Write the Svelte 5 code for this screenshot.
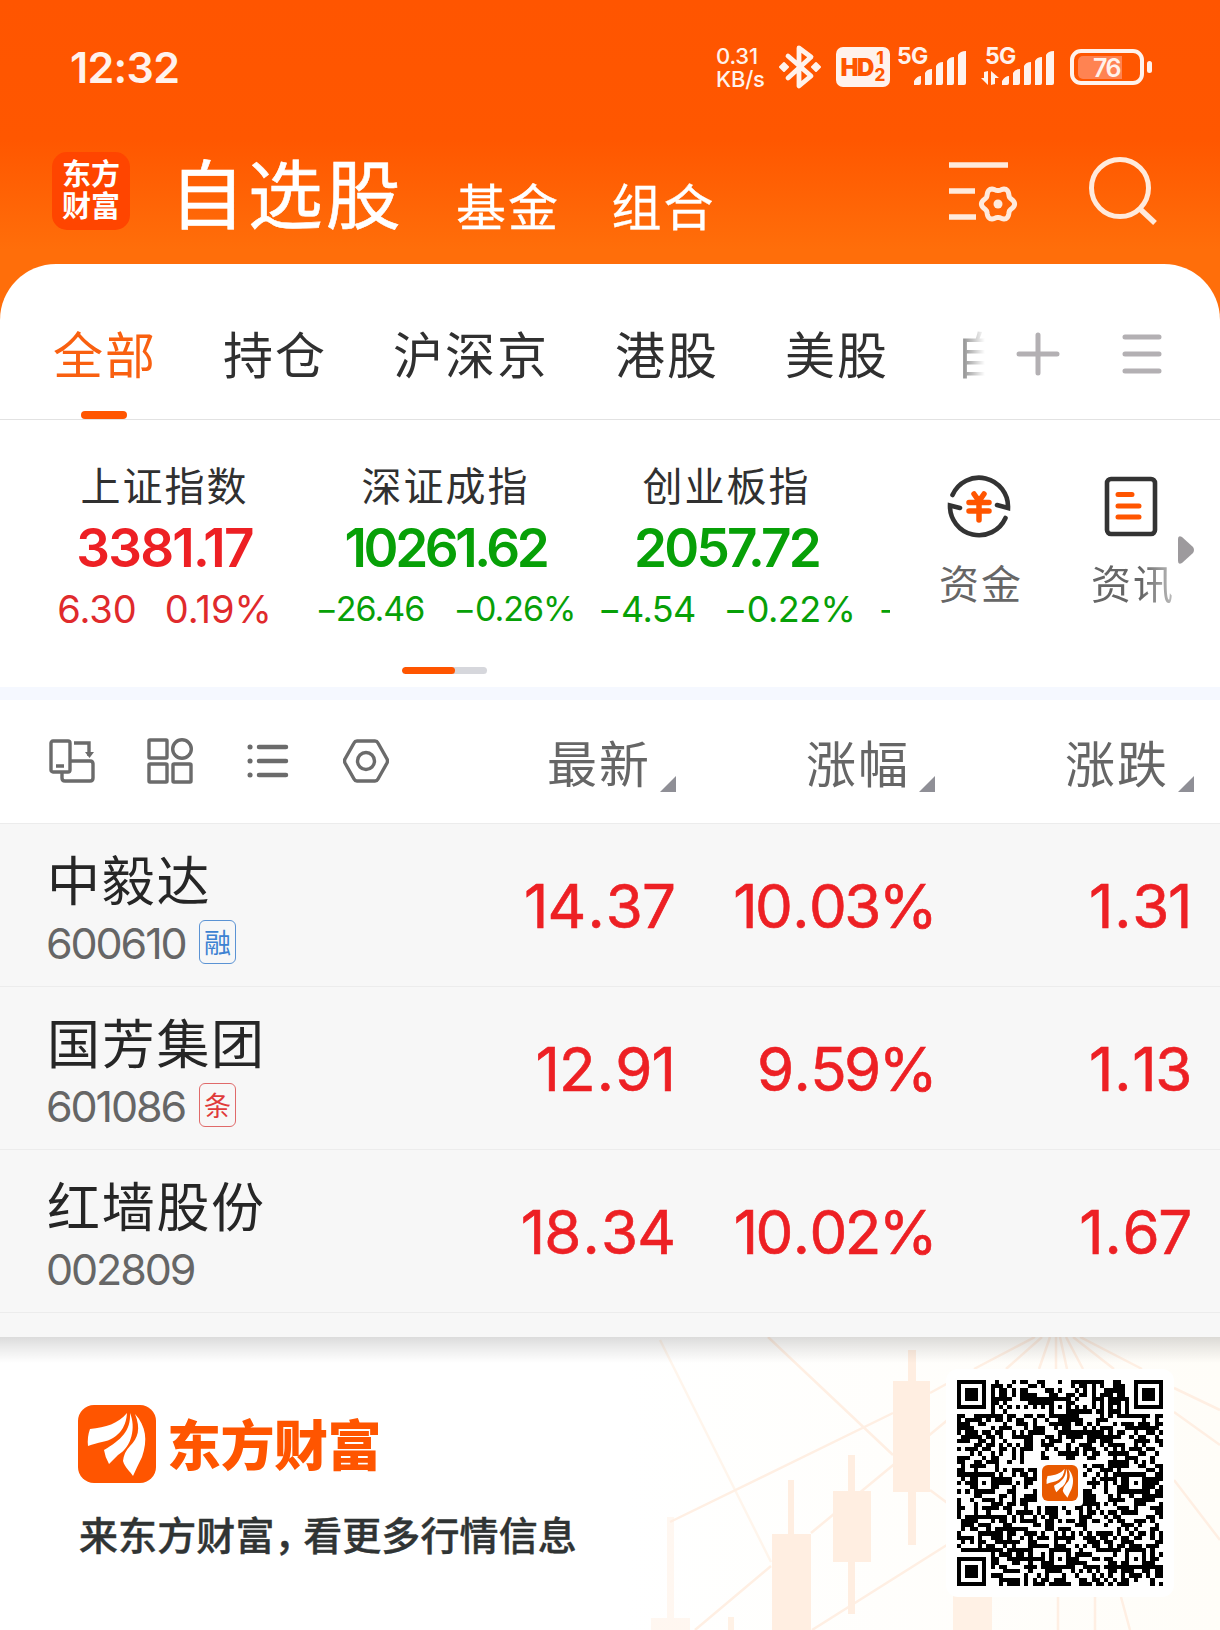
<script>
  const tabs = ['全部', '持仓', '沪深京', '港股', '美股', '自选'];

  const indices = [
    { name: '上证指数', value: '3381.17', change: '6.30', pct: '0.19%', dir: 'up', size: 'l' },
    { name: '深证成指', value: '10261.62', change: '−26.46', pct: '−0.26%', dir: 'down', size: 's' },
    { name: '创业板指', value: '2057.72', change: '−4.54', pct: '−0.22%', dir: 'down', size: 'm' }
  ];

  const columns = ['最新', '涨幅', '涨跌'];

  const stocks = [
    { name: '中毅达', code: '600610', tag: '融', tone: 'blue', last: '14.37', pct: '10.03%', diff: '1.31' },
    { name: '国芳集团', code: '601086', tag: '条', tone: 'red', last: '12.91', pct: '9.59%', diff: '1.13' },
    { name: '红墙股份', code: '002809', tag: '', tone: '', last: '18.34', pct: '10.02%', diff: '1.67' }
  ];

  // QR symbol, version 8: 49 x 49 modules
  const N = 49;
  function buildQr() {
    let seed = 20250;
    const rand = () => {
      seed = (seed * 1103515245 + 12345) % 2147483648;
      return seed / 2147483648;
    };
    const m = Array.from({ length: N }, () => Array.from({ length: N }, () => rand() < 0.52));
    const finder = (r0, c0) => {
      for (let r = -1; r < 8; r++)
        for (let c = -1; c < 8; c++) {
          const y = r0 + r, x = c0 + c;
          if (y < 0 || x < 0 || y >= N || x >= N) continue;
          const d = Math.max(Math.abs(r - 3), Math.abs(c - 3));
          m[y][x] = d === 3 || d <= 1;
        }
    };
    for (let i = 7; i < N - 7; i++) m[6][i] = m[i][6] = i % 2 === 0;
    for (const y of [6, 24, 42])
      for (const x of [6, 24, 42])
        for (let r = -2; r < 3; r++)
          for (let c = -2; c < 3; c++) m[y + r][x + c] = Math.max(Math.abs(r), Math.abs(c)) !== 1;
    finder(0, 0);
    finder(0, N - 7);
    finder(N - 7, 0);
    let d = '';
    for (let y = 0; y < N; y++)
      for (let x = 0; x < N; x++) {
        if (!m[y][x]) continue;
        let w = 1;
        while (x + w < N && m[y][x + w]) w++;
        d += `M${x} ${y}h${w}v1h-${w}z`;
        x += w;
      }
    return d;
  }
  const qr = buildQr();

  // rounded six-lobed gear outline
  const gear = (() => {
    let d = '';
    for (let i = 0; i <= 90; i++) {
      const a = (i / 90) * Math.PI * 2;
      const r = 15 + 1.6 * Math.cos(6 * a);
      d += `${i ? 'L' : 'M'}${(49 + r * Math.cos(a)).toFixed(2)} ${(44 + r * Math.sin(a)).toFixed(2)}`;
    }
    return d + 'Z';
  })();
</script>

{#snippet feather()}
  <path d="M49 8C40 19 28 22 12 24Q9 32 10 41C20 37 29 37 35 33Q48 25 49 8z" />
  <path d="M52 8C53 26 43 35 26 45Q27 52 31 59L40 50C54 42 58 22 52 8z" />
  <path d="M57 9C63 24 60 33 52 41Q46 47 45 56C47 63 52 66 55 71Q59 62 64 52C70 35 68 21 57 9z" />
{/snippet}

{#snippet bars()}
  <svg class="bars" viewBox="0 0 52 34" width="52" height="34">
    <path d="M0 34V30q3-5 7-5V32q0 2-2 2zM11 34V22q2-4 7-4V32q0 2-2 2zM22 34V15q2-4 7-4V32q0 2-2 2zM33 34V10q2-4 7-4V32q0 2-2 2zM44 34V4q2-4 8-4V32q0 2-2 2z" />
  </svg>
{/snippet}

{#snippet price(v)}
  <span class="num">{v.split('.')[0]}<span class="dot">.</span>{v.split('.')[1]}</span>
{/snippet}

<div class="screen">
  <header>
    <div class="status">
      <time>12:32</time>
      <div class="speed"><span>0.31</span><span>KB/s</span></div>
      <svg class="bt" viewBox="0 0 42 46" width="42" height="46">
        <path d="M9 12l23 20-12 10V4l12 9L9 34" fill="none" stroke="#fff2ec" stroke-width="4.8" stroke-linejoin="round" stroke-linecap="round" />
        <path d="M1 23l4-4 4 4-4 4zM33 23l4-4 4 4-4 4z" fill="#fff2ec" stroke="#fff2ec" stroke-width="2" stroke-linejoin="round" />
      </svg>
      <div class="hd"><b>HD</b><span><i>1</i><i>2</i></span></div>
      <div class="signal first"><b>5G</b>{@render bars()}</div>
      <div class="signal second">
        <b>5G</b>
        <svg class="updown" viewBox="0 0 18 14" width="18" height="14"><path d="M0 7h3V1l4-1v14zM10 14V0l8 7h-4v6z" /></svg>
        {@render bars()}
      </div>
      <div class="battery"><div class="cell"><div class="level">76</div></div><div class="nub"></div></div>
    </div>
    <div class="nav">
      <div class="brand"><span>东方</span><span>财富</span></div>
      <h1>自选股</h1>
      <a class="sub">基金</a>
      <a class="sub">组合</a>
      <svg class="filter" viewBox="0 0 70 64" width="70" height="64" fill="none" stroke="#ffeadc">
        <path d="M0 5h59M0 31h26M0 57h27" stroke-width="5.5" />
        <path d={gear} stroke-width="5" stroke-linejoin="round" />
        <circle cx="49" cy="44" r="4.5" fill="#ffeadc" stroke="none" />
      </svg>
      <svg class="search" viewBox="0 0 70 70" width="70" height="70" fill="none" stroke="#ffeadc" stroke-width="5">
        <circle cx="31" cy="31" r="28.5" />
        <path d="M50 51l16 15" stroke-width="5.5" />
      </svg>
    </div>
  </header>

  <main>
    <nav class="tabs">
      <div class="scroll">
        {#each tabs as tab, i}
          <span class="tab" class:active={i === 0}>{tab}</span>
        {/each}
      </div>
      <svg class="plus" viewBox="0 0 44 44" width="44" height="44"><path d="M3 22h38M22 3v38" /></svg>
      <svg class="lines" viewBox="0 0 40 44" width="40" height="44"><path d="M3 5h34M3 22h34M3 39h34" /></svg>
    </nav>

    <section class="market">
      <div class="quotes">
        {#each indices as q}
          <div class="quote {q.dir} {q.size}">
            <span class="qname">{q.name}</span>
            <span class="qvalue">{q.value}</span>
            <span class="qchange"><span>{q.change}</span><span>{q.pct}</span></span>
          </div>
        {/each}
        <div class="quote peek down"><span class="qchange">−</span></div>
      </div>
      <div class="tools">
        <div class="tool">
          <svg viewBox="0 0 64 64" width="64" height="64" fill="none" stroke="#333" stroke-width="4.6" stroke-linecap="round">
            <path d="M5.500 21A29 29 0 0 1 61 34L50 31" />
            <path d="M58.500 44A29 29 0 0 1 3 31.500L13 34" />
            <path d="M27 20l5 7 5-7M22 28.500h20M22 37h20M32 28v18" stroke="#ff5500" stroke-width="5.5" />
          </svg>
          <span>资金</span>
        </div>
        <div class="tool news">
          <svg viewBox="0 0 64 64" width="64" height="64" fill="none" stroke="#333" stroke-width="4.600" stroke-linecap="round">
            <rect x="8" y="5" width="48" height="55" rx="4" />
            <path d="M19 20.500h14M19 32h21M19 43h21" stroke="#ff5500" stroke-width="5" />
          </svg>
          <span>资讯</span>
        </div>
      </div>
      <svg class="more" viewBox="0 0 16 28" width="16" height="28"><path d="M0 3q0-4 4-2l11 10q2 3 0 6L4 27q-4 2-4-2z" fill="#9d9a9d" /></svg>
      <div class="pager"><div></div></div>
    </section>

    <section class="head">
      <div class="views">
        <svg viewBox="0 0 46 46" width="46" height="46">
          <rect x="2" y="3" width="19" height="31" rx="2" />
          <path d="M7 28h8M25 5h15v13M21 23h20q3 0 3 3v14q0 3-3 3H16q-3 0-3-3v-6" />
          <path d="M36 14h9l-4.500 6z" fill="#6b6b6b" stroke="none" />
        </svg>
        <svg viewBox="0 0 46 46" width="46" height="46">
          <rect x="2" y="2" width="18" height="18" rx="1" /><circle cx="35" cy="11" r="9.300" />
          <rect x="2" y="26" width="18" height="18" rx="1" /><rect x="26" y="26" width="18" height="18" rx="1" />
        </svg>
        <svg viewBox="0 0 46 46" width="46" height="46">
          <path d="M14 9h27M14 23h27M14 37h27" stroke-width="4.500" stroke-linecap="round" />
          <path d="M5 9h.1M5 23h.1M5 37h.1" stroke-width="5" stroke-linecap="round" />
        </svg>
        <svg viewBox="0 0 46 46" width="46" height="46">
          <path d="M14 3h18q2 0 3 2l9 16q1 2 0 4l-9 16q-1 2-3 2H14q-2 0-3-2L2 25q-1-2 0-4l9-16q1-2 3-2z" />
          <circle cx="23" cy="23" r="8.500" />
        </svg>
      </div>
      {#each columns as c}
        <div class="col"><span>{c}</span><svg viewBox="0 0 16 16" width="16" height="16"><path d="M16 0v16H0z" /></svg></div>
      {/each}
    </section>

    <section class="list">
      {#each stocks as s}
        <div class="row">
          <div class="who">
            <span class="name">{s.name}</span>
            <div class="meta">
              <span class="code">{s.code}</span>
              {#if s.tag}<span class="tag {s.tone}">{s.tag}</span>{/if}
            </div>
          </div>
          <div class="cellnum last">{@render price(s.last)}</div>
          <div class="cellnum pct">{@render price(s.pct)}</div>
          <div class="cellnum diff">{@render price(s.diff)}</div>
        </div>
      {/each}
    </section>
  </main>

  <footer>
    <svg class="backdrop" viewBox="620 1337 600 293" width="600" height="293">
      <defs>
        <linearGradient id="warm" x1="0" x2="1"><stop offset="0" stop-color="#fff" /><stop offset="1" stop-color="#fffdf8" /></linearGradient>
      </defs>
      <rect x="620" y="1337" width="600" height="293" fill="url(#warm)" />
      <g fill="none" stroke="#ffefe3" stroke-width="2.500">
        <path d="M660 1340L771 1562" stroke="#fff5ec" />
        <path d="M768 1337L893 1455M670 1522L893 1413M930 1393L950 1382M695 1630L771 1566M811 1533L950 1418M812 1630L950 1543M930 1490L950 1505" />
        <path d="M1035 1337L974 1369M1042 1337L1006 1369M1050 1337L1039 1369M1056 1337V1369M1060 1337L1067 1369M1066 1337L1083 1369M1073 1337L1114 1369M1080 1337L1142 1369" />
        <path d="M1174 1388L1220 1410M1174 1412L1220 1445M1174 1480L1220 1540M1058 1597V1630M1095 1597V1630M1121 1597L1130 1630" />
      </g>
      <g fill="#ffeee1">
        <path d="M893 1381h37v111h-37zM908 1350h8v195h-8zM833 1491h38v71h-38zM848 1455h7v159h-7zM772 1534h39v96h-39zM788 1480h6v60h-6z" />
        <path d="M667 1517h7v101h-7zM651 1618h39v12h-39z" opacity=".45" />
        <path d="M728 1617h6v13h-6zM953 1590h39v40h-39z" opacity=".85" />
      </g>
    </svg>
    <div class="shade"></div>
    <div class="promo">
      <div class="logo">
        <svg viewBox="0 0 78 78" width="78" height="78">
          <rect width="78" height="78" rx="16" fill="#ff5500" />
          <g fill="#fff">{@render feather()}</g>
        </svg>
        <strong>东方财富</strong>
      </div>
      <p>来东方财富<span class="comma">，</span>看更多行情信息</p>
    </div>
    <div class="qr">
      <svg viewBox="0 0 49 49" width="206" height="206" shape-rendering="crispEdges"><path d={qr} /></svg>
      <div class="qrlogo">
        <svg viewBox="0 0 78 78" width="36" height="36">
          <rect width="78" height="78" rx="13" fill="#e85a00" />
          <g fill="#fff">{@render feather()}</g>
        </svg>
      </div>
    </div>
  </footer>
</div>

<style>
  :global(body) { margin: 0; background: #fff; }
  * { box-sizing: border-box; }
  svg { display: block; flex: none; }
  .screen {
    width: 1220px;
    height: 1630px;
    overflow: hidden;
    display: flex;
    flex-direction: column;
    font-family: Inter, "Noto Sans CJK SC", sans-serif;
    white-space: nowrap;
    background: linear-gradient(#ff5500 0, #ff5700 140px, #ff6e0a 250px, #ff6e0a 340px, #fff 340px);
  }
  header { height: 264px; flex: none; }
  .status { height: 134px; display: flex; align-items: center; padding: 0 68px 0 70px; color: #fff2ec; }
  time { font-size: 43px; font-weight: 600; letter-spacing: -0.7px; width: 646px; }
  .speed { display: flex; flex-direction: column; font-size: 22px; font-weight: 500; line-height: 23px; width: 63px; padding-top: 2px; letter-spacing: -0.2px; }
  .hd {
    width: 54px; height: 40px; margin-left: 15px; border-radius: 7px; background: #fff2ec; color: #ff5500;
    display: flex; align-items: center; justify-content: center; gap: 2px;
  }
  .hd b { font-size: 24px; font-weight: 900; letter-spacing: -1.7px; }
  .hd span { display: flex; flex-direction: column; align-items: center; line-height: 17px; font-size: 17px; font-weight: 800; }
  .hd i { font-style: normal; }
  .signal { height: 40px; position: relative; width: 69px; margin-left: 7px; }
  .signal b { position: absolute; left: 0; top: -3px; font-size: 23px; line-height: 24px; font-weight: 700; letter-spacing: -0.7px; }
  .signal svg { fill: #fff2ec; }
  .signal .bars { position: absolute; right: 0; bottom: 2px; }
  .signal.second { width: 73px; margin-left: 15px; }
  .signal.second b { left: 4px; }
  .signal .updown { position: absolute; left: 0; bottom: 2px; }
  .battery { display: flex; align-items: center; gap: 3px; margin-left: 16px; }
  .cell { width: 74px; height: 36px; border: 4px solid #fff2ec; border-radius: 11px; padding: 3px 4px; }
  .level {
    width: 44px; height: 23px; background: #ff8352; border-radius: 5px 0 0 5px; padding-right: 2px;
    font-size: 25px; line-height: 24px; text-align: right; font-weight: 600; letter-spacing: -1.5px;
  }
  .nub { width: 5px; height: 12px; border-radius: 3px; background: #fff2ec; }

  .nav { height: 130px; display: flex; align-items: flex-start; padding: 0 61px 0 52px; color: #fff; }
  .brand {
    width: 78px; height: 78px; margin-top: 18px; border-radius: 15px; background: #ff4500;
    display: flex; flex-direction: column; align-items: center; justify-content: center;
    font-size: 29px; line-height: 32px; font-weight: 700;
  }
  h1 { margin: 12px 0 0 40px; width: 287px; font-size: 75px; line-height: 100px; font-weight: 400; letter-spacing: 3px; -webkit-text-stroke: 0.6px #fff; }
  .sub { margin-top: 40px; width: 156px; font-size: 50px; line-height: 68px; letter-spacing: 2px; -webkit-text-stroke: 0.3px #fff; }
  .filter { margin: 26px 0 0 182px; }
  .search { margin: 23px 0 0 70px; }

  main { background: #fff; border-radius: 56px 56px 0 0; flex: none; height: 1073px; }
  .tabs { height: 156px; border-bottom: 1px solid #e2e2e2; display: flex; padding-left: 53px; }
  .scroll {
    width: 932px; display: flex; gap: 66px; overflow: hidden; flex: none;
    -webkit-mask-image: linear-gradient(90deg, #000 890px, transparent 932px);
    mask-image: linear-gradient(90deg, #000 890px, transparent 932px);
  }
  .tab { flex: none; height: 155px; font-size: 50px; letter-spacing: 2px; line-height: 184px; color: #303030; display: flex; flex-direction: column; align-items: center; }
  .active { color: #f96010; }
  .active::after { content: ""; width: 46px; height: 8px; border-radius: 4px; background: #ff5500; margin: -37px 2px 0 0; }
  .plus { margin: 68px 0 0 31px; }
  .lines { margin: 68px 0 0 62px; }
  .plus path, .lines path { fill: none; stroke: #b3b0b3; stroke-width: 5; stroke-linecap: round; }

  .market { height: 280px; border-bottom: 13px solid #f5f8ff; display: grid; grid-template-columns: 890px 288px 1fr; grid-template-rows: 247px 1fr; }
  .quotes { display: flex; overflow: hidden; padding-left: 24px; }
  .quote { flex: none; width: 281px; display: flex; flex-direction: column; align-items: center; }
  .qname { font-size: 40px; letter-spacing: 2px; line-height: 56px; margin-top: 39px; color: #303030; }
  .qvalue { font-size: 53px; line-height: 60px; margin-top: 3px; font-weight: 600; letter-spacing: -1.8px; }
  .s .qvalue { letter-spacing: -3.4px; }
  .m .qvalue { letter-spacing: -2.8px; }
  .qchange { display: flex; gap: 28px; line-height: 44px; height: 44px; margin-top: 9px; }
  .l .qchange { font-size: 38px; }
  .s .qchange { font-size: 34px; letter-spacing: -1px; gap: 29px; }
  .m .qchange { font-size: 36px; letter-spacing: -0.6px; }
  .up { color: #e02a2c; }
  .up .qvalue { color: #ed2024; }
  .down { color: #07a007; }
  .peek { align-items: flex-start; padding: 167px 0 0 11px; }
  .peek .qchange { font-size: 34px; margin: 0; }
  .tools { display: flex; padding: 54px 0 0 49px; gap: 68px; overflow: hidden; }
  .tool { width: 84px; flex: none; display: flex; flex-direction: column; align-items: center; color: #666; }
  .tool span { font-size: 40px; line-height: 56px; letter-spacing: 2px; margin-top: 19px; }
  .tool svg { margin-right: 5px; }
  .news span { -webkit-mask-image: linear-gradient(90deg, #000 60%, rgba(0, 0, 0, .4)); mask-image: linear-gradient(90deg, #000 60%, rgba(0, 0, 0, .4)); }
  .more { margin-top: 116px; }
  .pager { width: 85px; height: 7px; border-radius: 4px; background: #d6d7dc; margin-left: 402px; overflow: hidden; }
  .pager div { width: 53px; height: 7px; border-radius: 4px; background: #ff5500; }

  .head, .row { display: grid; grid-template-columns: 450px 226px 259px 259px; }
  .head { height: 123px; align-items: start; }
  .views { display: flex; gap: 52px; padding: 38px 0 0 49px; }
  .views svg { fill: none; stroke: #6b6b6b; stroke-width: 3.4; }
  .col { display: flex; justify-content: flex-end; color: #666; }
  .col span { font-size: 50px; letter-spacing: 2px; line-height: 72px; margin: 29px 9px 0 0; }
  .col svg { margin-top: 76px; fill: #8f8f96; }
  .list { height: 514px; background: #f7f7f7; }
  .row { height: 163px; border-top: 1px solid #ececec; }
  .list::after { content: ""; display: block; border-top: 1px solid #ececec; }
  .who { padding: 18px 0 0 47px; }
  .name { display: block; font-size: 53px; letter-spacing: 1.7px; line-height: 80px; height: 78px; color: #262626; }
  .meta { display: flex; align-items: center; height: 44px; gap: 11px; }
  .code { font-size: 43px; line-height: 44px; letter-spacing: -2.1px; color: #666; width: 142px; margin-left: -1px; padding-top: 1px; }
  .tag { width: 37px; height: 44px; border: 1.500px solid; border-radius: 6px; font-size: 27px; line-height: 45px; text-align: center; }
  .blue { color: #3d82d2; border-color: #5b93d4; }
  .red { color: #e03b3b; border-color: #e06a6a; }
  .cellnum { font-size: 60px; line-height: 164px; text-align: right; color: #ed2024; -webkit-text-stroke: 0.6px #ed2024; }
  .dot { margin: 0 2px; }
  .last { letter-spacing: -0.9px; padding-right: 1px; }
  .pct { letter-spacing: -2.6px; }
  .diff { letter-spacing: -1.3px; padding-right: 3px; }

  footer { height: 293px; flex: none; display: grid; grid-template-columns: 946px 228px; background: #fff; position: relative; }
  .backdrop { position: absolute; right: 0; top: 0; }
  .shade { position: absolute; left: 0; right: 0; top: 0; height: 26px; background: linear-gradient(rgba(0, 0, 0, .14), rgba(0, 0, 0, .08) 40%, transparent); }
  .promo { padding: 68px 0 0 78px; position: relative; }
  .logo { display: flex; align-items: center; height: 78px; gap: 11px; }
  .logo strong { font-size: 54px; line-height: 78px; padding-top: 5px; font-weight: 900; color: #ff5500; letter-spacing: -0.5px; }
  p { margin: 23px 0 0 1px; font-size: 39px; line-height: 60px; letter-spacing: 0.1px; font-weight: 500; color: #303434; -webkit-text-stroke: 0.4px #303434; }
  .comma { font-feature-settings: "halt"; margin-right: 9px; }
  .qr { position: relative; margin-top: 32px; width: 228px; height: 228px; border-radius: 12px; background: #fff; padding: 11px; }
  .qrlogo { position: absolute; left: 91px; top: 91px; padding: 5px; background: #fff; border-radius: 4px; }
</style>
